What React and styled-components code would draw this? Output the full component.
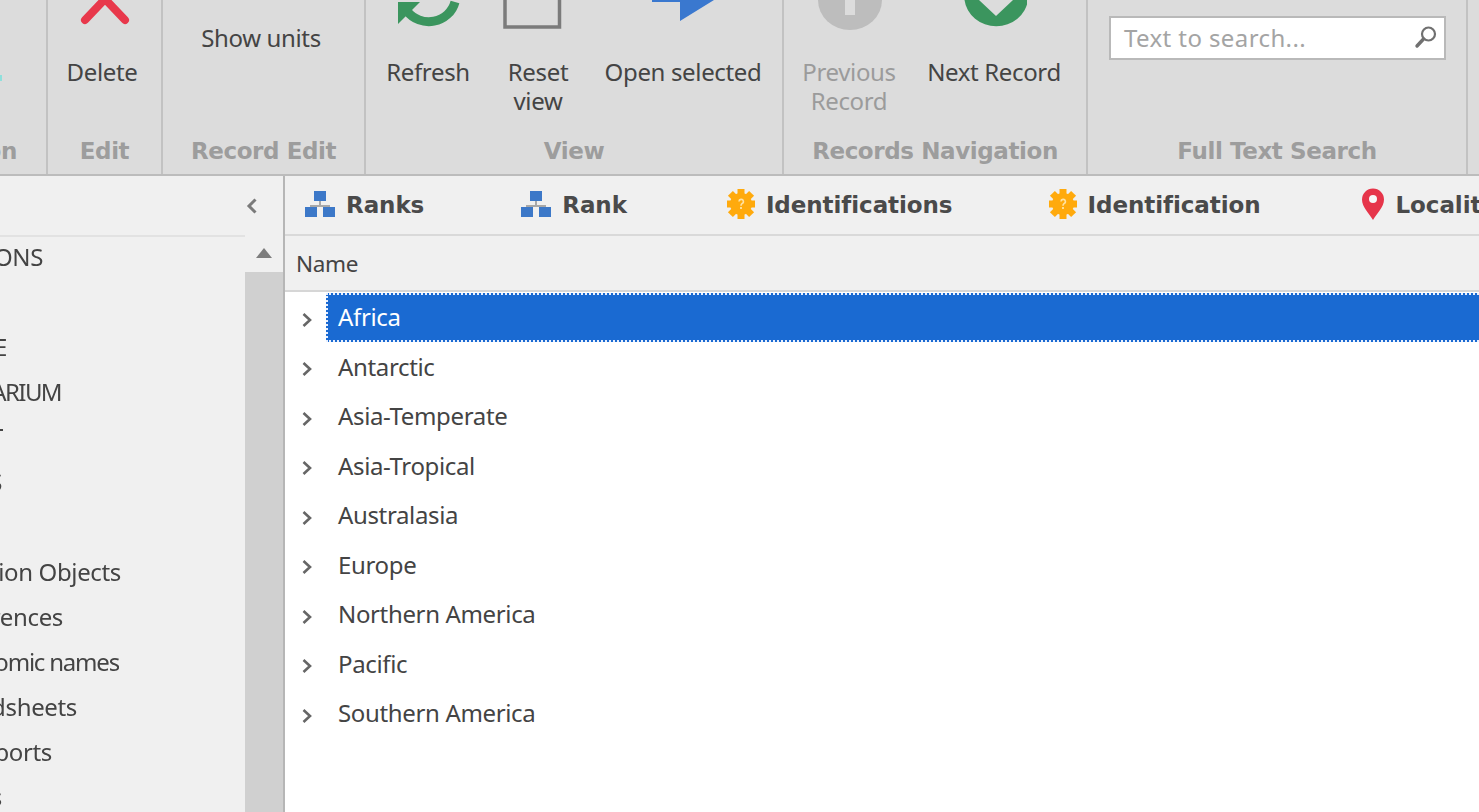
// vendor
import React from 'react';
import styled, { createGlobalStyle } from 'styled-components';

// +++++++++ CSS +++++++++

const Global = createGlobalStyle`
	html, body {
		margin: 0;
		padding: 0;
		background: #f0f0f0;
		overflow: hidden;
	}
	* {
		box-sizing: border-box;
	}
`;

const Shell = styled.div`
	display: flex;
	flex-direction: column;
	width: 1479px;
	height: 812px;
	overflow: hidden;
	font-family: "Noto Sans", "DejaVu Sans", sans-serif;
	font-size: 24px;
	letter-spacing: -0.35px;
	color: #444;
	filter: blur(0.45px);
`;

const Ribbon = styled.div`
	display: flex;
	flex: none;
	height: 176px;
	background: #dcdcdc;
	border-bottom: 2px solid #bcbcbc;
`;

const Group = styled.div`
	display: flex;
	flex-direction: column;
	flex: none;
	width: ${p => p.$width}px;
	border-right: 2px solid #c2c2c2;
`;

const Buttons = styled.div`
	display: flex;
	flex: 1;
	padding-left: ${p => p.$inset || 0}px;
`;

const GroupLabel = styled.div`
	display: flex;
	flex: none;
	justify-content: ${p => (p.$end ? 'flex-end' : 'center')};
	height: 48px;
	padding-right: ${p => p.$end || 0}px;
	overflow: hidden;
	white-space: nowrap;
	font-family: "DejaVu Sans", sans-serif;
	font-size: 23px;
	font-weight: 700;
	line-height: 50px;
	letter-spacing: -0.4px;
	color: #9d9d9d;
`;

const RibbonButton = styled.div`
	display: flex;
	flex-direction: column;
	align-items: center;
	flex: none;
	width: ${p => p.$width}px;
	text-align: center;
	line-height: 29px;
	white-space: nowrap;
	color: ${p => (p.$disabled ? '#9b9b9b' : '#444')};
`;

const IconSlot = styled.div`
	display: flex;
	justify-content: center;
	flex: none;
	height: 57px;
	svg {
		display: block;
	}
`;

const SmallButton = styled.div`
	flex: none;
	width: ${p => p.$width}px;
	padding-top: 23px;
	text-align: center;
	line-height: 29px;
	color: #444;
`;

const SearchArea = styled.div`
	padding: 16px 21px 0;
	flex: 1;
`;

const SearchBox = styled.div`
	display: flex;
	align-items: center;
	justify-content: space-between;
	width: 337px;
	height: 44px;
	padding: 0 6px 2px 13px;
	background: #fff;
	border: 2px solid #b9b9b9;
	letter-spacing: 0.4px;
	color: #a4a4a4;
`;

const Body = styled.div`
	display: flex;
	flex: 1;
	min-height: 0;
`;

const Sidebar = styled.div`
	display: flex;
	flex-direction: column;
	flex: none;
	width: 285px;
	background: #f0f0f0;
	border-right: 2px solid #b6b6b6;
`;

const SidebarHead = styled.div`
	display: flex;
	align-items: center;
	justify-content: flex-end;
	flex: none;
	height: 59px;
	padding: 0 25px 0 0;
`;

const SidebarBody = styled.div`
	display: flex;
	flex: 1;
	min-height: 0;
`;

const NavList = styled.div`
	flex: 1;
	overflow: hidden;
	border-top: 2px solid #e2e2e2;
`;

const NavItem = styled.div`
	display: flex;
	justify-content: flex-end;
	width: ${p => p.$end}px;
	height: 45px;
	overflow: hidden;
	line-height: 40px;
	white-space: nowrap;
	letter-spacing: ${p => p.$spacing ?? -0.35}px;
`;

const ScrollBar = styled.div`
	display: flex;
	flex-direction: column;
	flex: none;
	width: 38px;
`;

const ScrollButton = styled.div`
	display: flex;
	align-items: center;
	justify-content: center;
	flex: none;
	height: 37px;
	padding: 0 0 1px 0;
`;

const ScrollTrack = styled.div`
	flex: 1;
	background: #d0d0d0;
`;

const Main = styled.div`
	display: flex;
	flex-direction: column;
	flex: 1;
	min-width: 0;
	background: #fff;
`;

const TabBar = styled.div`
	display: flex;
	align-items: center;
	flex: none;
	height: 60px;
	padding-left: 20px;
	overflow: hidden;
	background: #f0f0f0;
	border-bottom: 2px solid #d9d9d9;
`;

const Tab = styled.div`
	display: flex;
	align-items: center;
	flex: none;
	gap: 11px;
	margin-right: ${p => p.$gap}px;
	font-family: "DejaVu Sans", sans-serif;
	font-size: 23px;
	font-weight: 700;
	letter-spacing: -0.07px;
	color: #4a4a4a;
	white-space: nowrap;
	svg {
		flex: none;
		margin-bottom: 3px;
	}
`;

const ColumnHead = styled.div`
	display: flex;
	align-items: center;
	flex: none;
	height: 56px;
	padding: 0 0 0 11px;
	background: #f0f0f0;
	border-bottom: 2px solid #d6d6d6;
	font-size: 22.5px;
`;

const Tree = styled.div`
	flex: 1;
	padding-top: 1px;
`;

const Row = styled.div`
	display: flex;
	align-items: stretch;
	height: 49.5px;
`;

const Expander = styled.div`
	display: flex;
	align-items: center;
	justify-content: center;
	flex: none;
	width: 41px;
	padding: 4px 0 0 2px;
`;

const Cell = styled.div`
	display: flex;
	align-items: center;
	flex: 1;
	height: 49px;
	padding: 0 0 2px 10px;
	border: 2px dotted ${p => (p.$selected ? '#e8f0ff' : 'transparent')};
	border-right: 0;
	background: ${p => (p.$selected ? '#1a6ad2' : 'transparent')};
	color: ${p => (p.$selected ? '#fff' : '#444')};
`;

// +++++++++ ICONS +++++++++

const EdgeSpeck = () => (
	<svg width="3" height="82" viewBox="0 0 3 82">
		<rect x="0" y="75" width="2" height="6" fill="#8fe0dc" />
	</svg>
);

const DeleteIcon = () => (
	<svg width="60" height="26" viewBox="0 0 60 26">
		<path d="M13 20 L33 -1 L53 20" fill="none" stroke="#e8384b" strokeWidth="8" strokeLinecap="round" strokeLinejoin="round" />
	</svg>
);

const RefreshIcon = () => (
	<svg width="64" height="32" viewBox="396 0 64 32">
		<path d="M455 2 A 27 26 0 0 1 407 11" fill="none" stroke="#3b955e" strokeWidth="9" />
		<path d="M398 2 L420 2 L398 24 Z" fill="#3b955e" />
	</svg>
);

const ResetIcon = () => (
	<svg width="70" height="32" viewBox="503 0 70 32">
		<path d="M505 0 V27 H559.5 V0" fill="none" stroke="#7b7b7b" strokeWidth="3.5" />
	</svg>
);

const OpenIcon = () => (
	<svg width="62" height="26" viewBox="652 0 62 26">
		<path d="M652 0 H714 L680 21 V2 H652 Z" fill="#3a78cf" />
	</svg>
);

const PreviousIcon = () => (
	<svg width="66" height="32" viewBox="816 0 66 32">
		<path d="M818 0 A 32 30 0 0 0 882 0 Z" fill="#bdbdbd" />
		<rect x="845" y="0" width="10" height="15" fill="#dcdcdc" />
	</svg>
);

const NextIcon = () => (
	<svg width="66" height="32" viewBox="961 0 66 32">
		<path d="M964.5 0 A 32 30 0 0 0 1028 0 Z" fill="#3b955e" />
		<path d="M979 0 L996 16 L1013 0 Z" fill="#dcdcdc" />
	</svg>
);

const SearchIcon = () => (
	<svg width="24" height="24" viewBox="0 0 24 24">
		<circle cx="14.5" cy="9" r="6.5" fill="none" stroke="#707070" strokeWidth="2.2" />
		<path d="M9.5 14 L3 21" fill="none" stroke="#707070" strokeWidth="3.4" strokeLinecap="round" />
	</svg>
);

const RankIcon = () => (
	<svg width="30" height="26" viewBox="0 0 30 26">
		<path d="M15 8 V15 M6 20 V15 H24 V20" fill="none" stroke="#a8a8a8" strokeWidth="2" />
		<rect x="9" y="0" width="12" height="10" fill="#3c78c8" />
		<rect x="0" y="16" width="12" height="10" fill="#3c78c8" />
		<rect x="18" y="16" width="12" height="10" fill="#3c78c8" />
	</svg>
);

const gearTeeth = [0, 45, 90, 135];

const GearIcon = () => (
	<svg width="28" height="30" viewBox="0 0 28 30">
		{gearTeeth.map(angle => (
			<rect key={angle} x="10.5" y="0" width="7" height="30" fill="#ffaa0d" transform={`rotate(${angle} 14 15)`} />
		))}
		<circle cx="14" cy="15" r="11" fill="#ffaa0d" />
		<path d="M12 12.5 A 2.2 2.2 0 1 1 15 14.6 Q 14 15.4 14 16.8" fill="none" stroke="#ffe2a4" strokeWidth="1.6" />
		<rect x="13.1" y="18" width="1.8" height="2" fill="#ffe2a4" />
	</svg>
);

const PinIcon = () => (
	<svg width="24" height="32" viewBox="0 0 24 32">
		<path d="M12 32 C 8 25 1 19 1 11.5 A 11 11 0 0 1 23 11.5 C 23 19 16 25 12 32 Z" fill="#e6354a" />
		<circle cx="12" cy="11" r="4" fill="#f7f7f7" />
	</svg>
);

const CollapseIcon = () => (
	<svg width="12" height="18" viewBox="0 0 12 18">
		<path d="M9.5 2.5 L3 9 L9.5 15.5" fill="none" stroke="#7a7a7a" strokeWidth="3" />
	</svg>
);

const ScrollUpIcon = () => (
	<svg width="18" height="12" viewBox="0 0 18 12">
		<path d="M9 1 L17 11 H1 Z" fill="#7d7d7d" />
	</svg>
);

const RowArrow = () => (
	<svg width="12" height="16" viewBox="0 0 12 16">
		<path d="M2.5 2 L9 8 L2.5 14" fill="none" stroke="#666" strokeWidth="2.6" />
	</svg>
);

// +++++++++ DATA +++++++++

const navItems = [
	{ end: 43, text: 'IDENTIFICATIONS' },
	{ end: 0, text: '' },
	{ end: 7, text: 'PROFILE' },
	{ end: 61, text: 'HERBARIUM', spacing: -1.6 },
	{ end: 3, text: 'LIST' },
	{ end: 2, text: 'LABELS' },
	{ end: 0, text: '' },
	{ end: 121, text: 'Collection Objects' },
	{ end: 63, text: 'References' },
	{ end: 119, text: 'Taxonomic names', spacing: -1.2 },
	{ end: 77, text: 'Spreadsheets' },
	{ end: 52, text: 'Reports' },
	{ end: 2, text: 'Settings' },
];

const tabs = [
	{ label: 'Ranks', icon: <RankIcon />, gap: 97 },
	{ label: 'Rank', icon: <RankIcon />, gap: 100 },
	{ label: 'Identifications', icon: <GearIcon />, gap: 96 },
	{ label: 'Identification', icon: <GearIcon />, gap: 100 },
	{ label: 'Localities', icon: <PinIcon />, gap: 0 },
];

const regions = [
	'Africa',
	'Antarctic',
	'Asia-Temperate',
	'Asia-Tropical',
	'Australasia',
	'Europe',
	'Northern America',
	'Pacific',
	'Southern America',
];

// +++++++++ COMPONENT +++++++++

const App = () => (
	<Shell>
		<Global />
		<Ribbon>
			<Group $width={48}>
				<Buttons><EdgeSpeck /></Buttons>
				<GroupLabel $end={29}>Action</GroupLabel>
			</Group>
			<Group $width={115}>
				<Buttons>
					<RibbonButton $width={108}>
						<IconSlot><DeleteIcon /></IconSlot>
						Delete
					</RibbonButton>
				</Buttons>
				<GroupLabel>Edit</GroupLabel>
			</Group>
			<Group $width={203}>
				<Buttons>
					<SmallButton $width={196}>Show units</SmallButton>
				</Buttons>
				<GroupLabel>Record Edit</GroupLabel>
			</Group>
			<Group $width={418}>
				<Buttons $inset={10}>
					<RibbonButton $width={104}>
						<IconSlot><RefreshIcon /></IconSlot>
						Refresh
					</RibbonButton>
					<RibbonButton $width={116}>
						<IconSlot><ResetIcon /></IconSlot>
						Reset<br />view
					</RibbonButton>
					<RibbonButton $width={174}>
						<IconSlot><OpenIcon /></IconSlot>
						Open selected
					</RibbonButton>
				</Buttons>
				<GroupLabel>View</GroupLabel>
			</Group>
			<Group $width={304}>
				<Buttons $inset={10}>
					<RibbonButton $disabled $width={110}>
						<IconSlot><PreviousIcon /></IconSlot>
						Previous<br />Record
					</RibbonButton>
					<RibbonButton $width={180}>
						<IconSlot><NextIcon /></IconSlot>
						Next Record
					</RibbonButton>
				</Buttons>
				<GroupLabel>Records Navigation</GroupLabel>
			</Group>
			<Group $width={380}>
				<SearchArea>
					<SearchBox>
						Text to search...
						<SearchIcon />
					</SearchBox>
				</SearchArea>
				<GroupLabel>Full Text Search</GroupLabel>
			</Group>
		</Ribbon>
		<Body>
			<Sidebar>
				<SidebarHead><CollapseIcon /></SidebarHead>
				<SidebarBody>
					<NavList>
						{navItems.map((item, i) => (
							<NavItem key={i} $end={item.end} $spacing={item.spacing}>{item.text}</NavItem>
						))}
					</NavList>
					<ScrollBar>
						<ScrollButton><ScrollUpIcon /></ScrollButton>
						<ScrollTrack />
					</ScrollBar>
				</SidebarBody>
			</Sidebar>
			<Main>
				<TabBar>
					{tabs.map(tab => (
						<Tab key={tab.label} $gap={tab.gap}>
							{tab.icon}
							{tab.label}
						</Tab>
					))}
				</TabBar>
				<ColumnHead>Name</ColumnHead>
				<Tree>
					{regions.map((region, i) => (
						<Row key={region}>
							<Expander><RowArrow /></Expander>
							<Cell $selected={i === 0}>{region}</Cell>
						</Row>
					))}
				</Tree>
			</Main>
		</Body>
	</Shell>
);

export default App;
